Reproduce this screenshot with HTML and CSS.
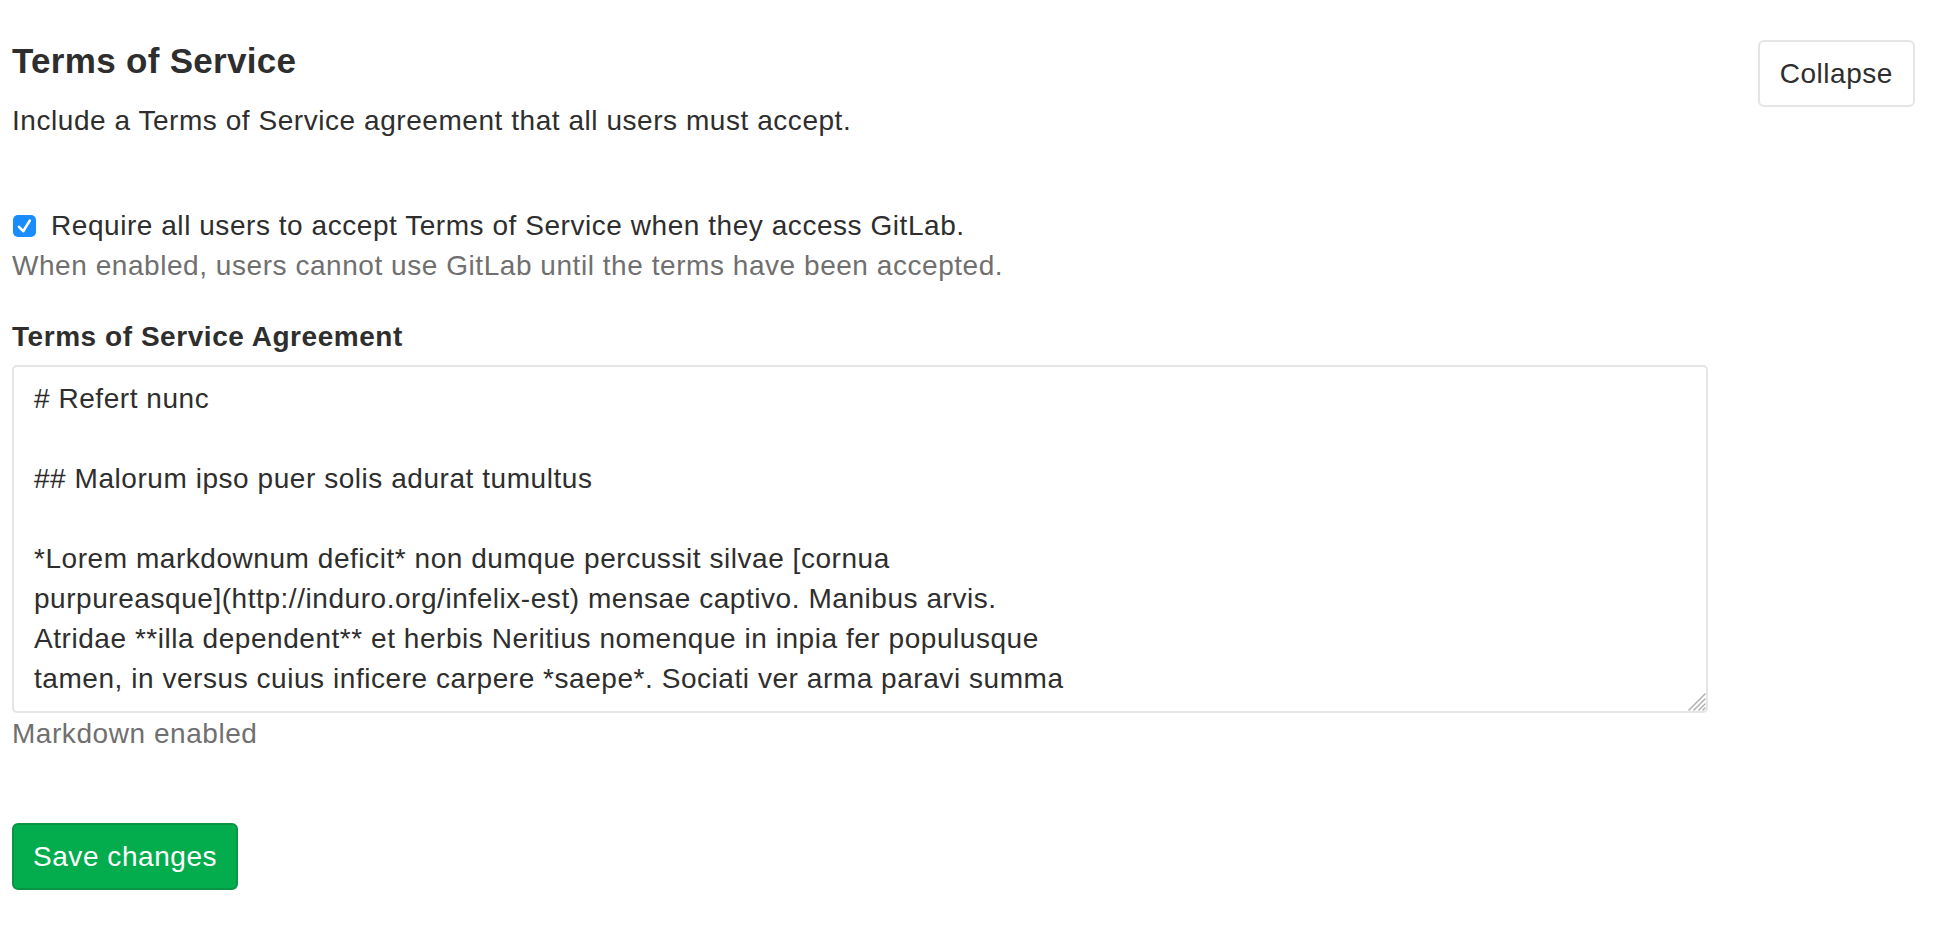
FILE: index.html
```html
<!DOCTYPE html>
<html lang="en">
<head>
<meta charset="utf-8">
<title>Terms of Service</title>
<link rel="stylesheet" href="styles.css">
</head>
<body>
<section class="settings">
  <div class="settings-header">
    <div class="header-text">
      <h4 class="settings-title">Terms of Service</h4>
      <p class="settings-desc">Include a Terms of Service agreement that all users must accept.</p>
    </div>
    <button type="button" class="btn btn-default">Collapse</button>
  </div>
  <form class="settings-content">
    <div class="form-group">
      <label class="check-label">
        <svg class="check-box" width="23" height="22" viewBox="0 0 23 22" aria-hidden="true">
          <rect x="0" y="0" width="23" height="22" rx="5" fill="#1a8cfb"/>
          <path d="M6 11.8 L10.2 16.2 L16.8 5.6" fill="none" stroke="#fff" stroke-width="2.6" stroke-linecap="round" stroke-linejoin="round"/>
        </svg>
        <span>Require all users to accept Terms of Service when they access GitLab.</span>
      </label>
      <div class="help-text">When enabled, users cannot use GitLab until the terms have been accepted.</div>
    </div>
    <div class="form-group">
      <label class="field-label" for="terms">Terms of Service Agreement</label>
      <div class="textarea-wrap">
        <textarea id="terms" class="form-control"># Refert nunc

## Malorum ipso puer solis adurat tumultus

*Lorem markdownum deficit* non dumque percussit silvae [cornua
purpureasque](http://induro.org/infelix-est) mensae captivo. Manibus arvis.
Atridae **illa dependent** et herbis Neritius nomenque in inpia fer populusque
tamen, in versus cuius inficere carpere *saepe*. Sociati ver arma paravi summa</textarea>
        <svg class="resize-grip" width="20" height="20" viewBox="0 0 20 20" aria-hidden="true">
          <g stroke="#b3b3b3" stroke-width="1.6" stroke-linecap="round">
            <line x1="19" y1="3" x2="3" y2="19"/>
            <line x1="19" y1="8" x2="8" y2="19"/>
            <line x1="19" y1="13" x2="13" y2="19"/>
            <line x1="19" y1="17" x2="17" y2="19"/>
          </g>
        </svg>
      </div>
      <div class="help-text help-after">Markdown enabled</div>
    </div>
    <button type="button" class="btn btn-success">Save changes</button>
  </form>
</section>
</body>
</html>
```
FILE: styles.css
```css
html, body {
  margin: 0;
  background: #ffffff;
}

body {
  padding: 40px 31px 0 12px;
  font-family: "Liberation Sans", Arial, sans-serif;
  font-size: 28px;
  line-height: 40px;
  letter-spacing: 0.55px;
  color: #2e2e2e;
}

.settings-header {
  display: flex;
  justify-content: space-between;
  align-items: flex-start;
}

.settings-title {
  margin: 0 0 19px;
  font-size: 35px;
  line-height: 42px;
  font-weight: 700;
  letter-spacing: 0.3px;
}

.settings-desc {
  margin: 0;
}

.btn {
  font-family: inherit;
  font-size: 28px;
  line-height: 39px;
  letter-spacing: 0.55px;
  padding: 12px 20px;
  border-radius: 6px;
  cursor: pointer;
}

.btn-default {
  background: #ffffff;
  border: 2px solid #e5e5e5;
  color: #2e2e2e;
}

.btn-success {
  background: #03ac4d;
  border: 2px solid #0b9444;
  color: #ffffff;
  padding: 12px 19px;
}

.settings-content {
  max-width: 1696px;
  margin-top: 65px;
}

.form-group {
  margin-bottom: 31px;
}

.check-label {
  display: flex;
  align-items: center;
  gap: 15px;
}

.check-box {
  flex: none;
  margin-left: 1px;
}

.help-text {
  color: #707070;
}

.field-label {
  display: block;
  font-weight: 700;
  margin-bottom: 8px;
}

.textarea-wrap {
  position: relative;
}

.form-control {
  display: block;
  box-sizing: border-box;
  width: 100%;
  height: 348px;
  margin: 0;
  padding: 12px 20px;
  border: 2px solid #e5e5e5;
  border-radius: 5px;
  font-family: inherit;
  font-size: 28px;
  line-height: 40px;
  letter-spacing: 0.55px;
  color: #2e2e2e;
  background: #ffffff;
  overflow: hidden;
  resize: none;
  white-space: pre;
}

.resize-grip {
  position: absolute;
  right: 2px;
  bottom: 2px;
  pointer-events: none;
}

.help-after {
  margin-top: 1px;
}

.form-group:last-of-type {
  margin-bottom: 69px;
}
```
